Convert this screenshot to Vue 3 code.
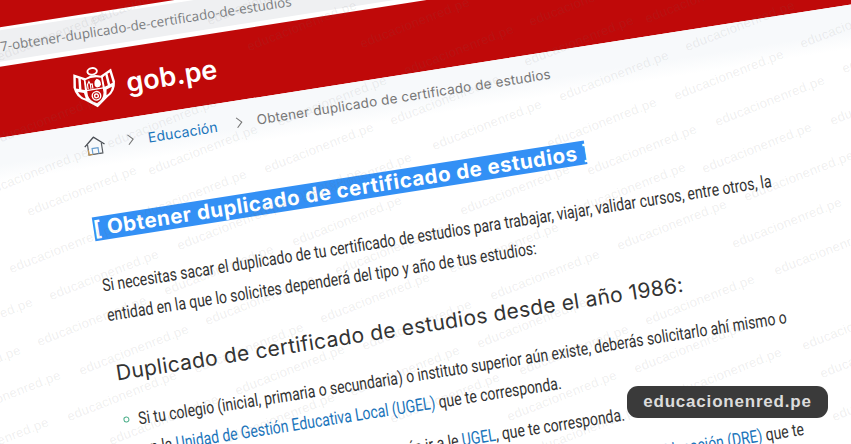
<template>
  <div class="stage">
    <div class="sheet">
      <div class="top-strip"></div>
      <div class="url-bar">7-obtener-duplicado-de-certificado-de-estudios</div>

      <header class="gob-header">
        <svg class="crest" viewBox="0 0 46 44">
          <ellipse cx="23" cy="5" rx="5" ry="3.4" fill="none" stroke="#fff" stroke-width="2" />
          <path d="M15 11 L3 5 L1 19 Q2 30 11 34 L23 43 L35 34 Q44 30 45 19 L43 5 L31 11 Q23 7 15 11 Z" fill="#fff" />
          <path d="M5 9 L7.5 10 L6.5 21 L3.5 20 Z M10 11 L13 13 L12.5 23 L9 22 Z M41 9 L38.5 10 L39.5 21 L42.5 20 Z M36 11 L33 13 L33.5 23 L37 22 Z" fill="#bf0909" />
          <path d="M5 24 L11 26 L12 32 Q7 30 5 24 Z M41 24 L35 26 L34 32 Q39 30 41 24 Z" fill="#bf0909" />
          <path d="M14 12.5 Q23 9 32 12.5 L32 29 Q31 36 23 39.5 Q15 36 14 29 Z" fill="#bf0909" stroke="#fff" stroke-width="1.4" />
          <path d="M14 24 H32" stroke="#fff" stroke-width="1.4" />
          <path d="M16 23 V18 L18 15 L19 18 H21 V23 M19 18 V23" fill="none" stroke="#fff" stroke-width="1.2" />
          <path d="M26.5 13.5 Q30.5 15 30 20 Q29 22.5 26.5 22.5 Q24 22.5 23.3 20 Q23 15 26.5 13.5 Z" fill="#fff" />
          <circle cx="23.5" cy="31" r="5.2" fill="#fff" />
          <circle cx="23.5" cy="31" r="3.2" fill="none" stroke="#bf0909" stroke-width="1" />
          <circle cx="23.5" cy="31" r="1.2" fill="#bf0909" />
        </svg>
        <span class="gob-name">gob.pe</span>
      </header>

      <nav class="crumbs">
        <svg class="home" viewBox="0 0 22 19">
          <path d="M1 9.5 L11 1 L21 9.5" fill="none" stroke="#4b4f55" stroke-width="1.3" />
          <path d="M4 7.5 V18 H18 V7.5" fill="none" stroke="#5b5f64" stroke-width="1.2" />
          <path d="M8 18 V12 H14 V18" fill="none" stroke="#6a9fd0" stroke-width="1.2" />
          <path d="M4 13 V18 H8" fill="none" stroke="#c99a55" stroke-width="1.2" />
        </svg>
        <svg class="chevron" viewBox="0 0 7 12"><path d="M1 1 L6 6 L1 11" fill="none" stroke="#777" stroke-width="1.1" /></svg>
        <span class="crumb-link">Educación</span>
        <svg class="chevron" viewBox="0 0 7 12"><path d="M1 1 L6 6 L1 11" fill="none" stroke="#777" stroke-width="1.1" /></svg>
        <span class="crumb-current">Obtener duplicado de certificado de estudios</span>
      </nav>

      <main class="content">
        <h1 class="selected-title">[ Obtener duplicado de certificado de estudios ]</h1>

        <p class="intro">
          <span class="narrow">Si necesitas sacar el duplicado de tu certificado de estudios para trabajar, viajar, validar cursos, entre otros, la</span>
          <span class="narrow">entidad en la que lo solicites dependerá del tipo y año de tus estudios:</span>
        </p>

        <h2 class="section-title">Duplicado de certificado de estudios desde el año 1986:</h2>

        <ul class="steps">
          <li>
            <span class="narrow">Si tu colegio (inicial, primaria o secundaria) o instituto superior aún existe, deberás solicitarlo ahí mismo o</span>
            <span class="narrow">en la <a>Unidad de Gestión Educativa Local (UGEL)</a> que te corresponda.</span>
          </li>
          <li>
            <span class="narrow">Si tu colegio o instituto ya no existe, deberás ir a le <a>UGEL</a>, que te corresponda.</span>
          </li>
          <li>
            <span class="narrow">Si tu certificado es anterior, debes pedirlo en la oficina de la <a>Dirección Regional de Educación (DRE)</a> que te</span>
          </li>
        </ul>
      </main>
    </div>

    <div class="marks">
      <span
        v-for="(p, i) in marks"
        :key="i"
        class="mark"
        :style="{ left: p[0] + 'px', top: p[1] + 'px' }"
      >educacionenred.pe</span>
    </div>

    <div class="badge">educacionenred.pe</div>
  </div>
</template>

<script setup>
// where each watermark starts (bottom left of the text), in screen pixels
const marks = [
  [-5, 147], [0, 63], [93, 27], [210, 27], [250, 53], [363, 50], [377, 0], [407, 77],
  [532, 28], [648, 25], [688, 53], [803, 50], [110, 150], [151, 177], [267, 175], [280, 128],
  [393, 127], [527, 68], [562, 103], [677, 102], [845, 75], [718, 128], [833, 127], [435, 152],
  [550, 150], [590, 177], [705, 175], [747, 203], [463, 217], [579, 215],
  [-18, 200], [30, 218], [140, 222], [255, 220], [305, 205], [12, 275], [52, 302], [180, 252],
  [295, 248], [338, 277], [167, 297], [208, 327], [323, 325], [40, 348], [82, 377], [197, 375],
  [365, 352], [-46, 423], [70, 423], [238, 397], [353, 398], [-74, 350], [-86, 398], [-58, 470],
  [452, 275], [493, 302], [620, 252], [735, 250], [777, 277], [648, 327], [480, 350], [522, 377],
  [637, 375], [805, 352], [510, 423], [534, 457], [675, 400], [835, 423], [823, 380],
  [112, 447], [228, 445], [393, 425]
]
</script>

<style>
html,
body {
  margin: 0;
  background: #fff;
}
</style>

<style scoped>
.stage {
  position: relative;
  width: 851px;
  height: 444px;
  overflow: hidden;
  background: #fff;
}

/* the whole page is photographed at an angle */
.sheet {
  width: 1100px;
  height: 620px;
  transform-origin: 0 0;
  transform: rotate(-8.9deg) translateX(-80px);
  color: #333;
}

.top-strip {
  height: 27px;
  background: #bf0909;
}

.url-bar {
  height: 31px;
  margin: 3px 0 5px;
  padding-left: 73px;
  background: #eff0f2;
  color: #7b7d80;
  font: 13.4px/32px "Open Sans", sans-serif;
}

.gob-header {
  display: flex;
  align-items: center;
  gap: 10px;
  height: 70px;
  padding-left: 138px;
  background: #bf0909;
}

.crest {
  width: 44px;
  height: 42px;
}

.gob-name {
  color: #fff;
  font: 600 27px "Inter", sans-serif;
}

.crumbs {
  display: flex;
  align-items: center;
  height: 44px;
  padding-left: 140px;
  background: linear-gradient(#f7f9fb 60%, #fff);
  font-family: "Inter", sans-serif;
}

.home {
  width: 22px;
  height: 19px;
  margin-right: 22px;
}

.chevron {
  width: 7px;
  height: 12px;
}

.crumb-link {
  margin: 0 19px 0 14px;
  color: #1b75bb;
  font-size: 14px;
  letter-spacing: 0.1px;
}

.crumb-current {
  margin-left: 14px;
  color: #777;
  font-size: 13.5px;
  letter-spacing: 0.2px;
}

.content {
  padding: 49px 0 0 137px;
}

.selected-title {
  display: block;
  margin: 0;
  height: 24px;
  width: 498px;
  background: #3390f5;
  color: #fff;
  font: 700 20.5px/24px "Inter", sans-serif;
  letter-spacing: 0.55px;
  white-space: nowrap;
}

.intro {
  margin: 31px 0 0;
  font: 17.5px/29.5px "Roboto", sans-serif;
}

.narrow {
  display: block;
  transform: scaleX(0.8);
  transform-origin: 0 50%;
  white-space: nowrap;
}

.narrow a {
  color: #1b75bb;
}

.section-title {
  margin: 30px 0 0;
  color: #333;
  font: 400 21px/28px "Inter", sans-serif;
  letter-spacing: 0.3px;
  white-space: nowrap;
}

.steps {
  margin: 20px 0 0;
  padding: 0;
  list-style: none;
  font: 17.5px/29.5px "Roboto", sans-serif;
}

.steps li {
  position: relative;
  margin-bottom: 12px;
  padding-left: 15px;
}

.steps li::before {
  content: "";
  position: absolute;
  left: 0;
  top: 10px;
  width: 4px;
  height: 4px;
  border: 1.5px solid #4fb08c;
  border-radius: 50%;
}

.marks {
  position: absolute;
  inset: 0;
  pointer-events: none;
}

.mark {
  position: absolute;
  color: rgba(110, 110, 110, 0.11);
  font: 13px/1 "Liberation Sans", sans-serif;
  letter-spacing: 0.35px;
  white-space: nowrap;
  transform-origin: 0 100%;
  transform: translateY(-100%) rotate(-21.5deg);
}

.badge {
  position: absolute;
  right: 23px;
  bottom: 26px;
  display: flex;
  align-items: center;
  justify-content: center;
  width: 201px;
  height: 32px;
  border-radius: 11px;
  background: #3a3a3a;
  color: #dcdcdc;
  font: 700 17px "Liberation Sans", sans-serif;
  letter-spacing: 0.8px;
}
</style>
